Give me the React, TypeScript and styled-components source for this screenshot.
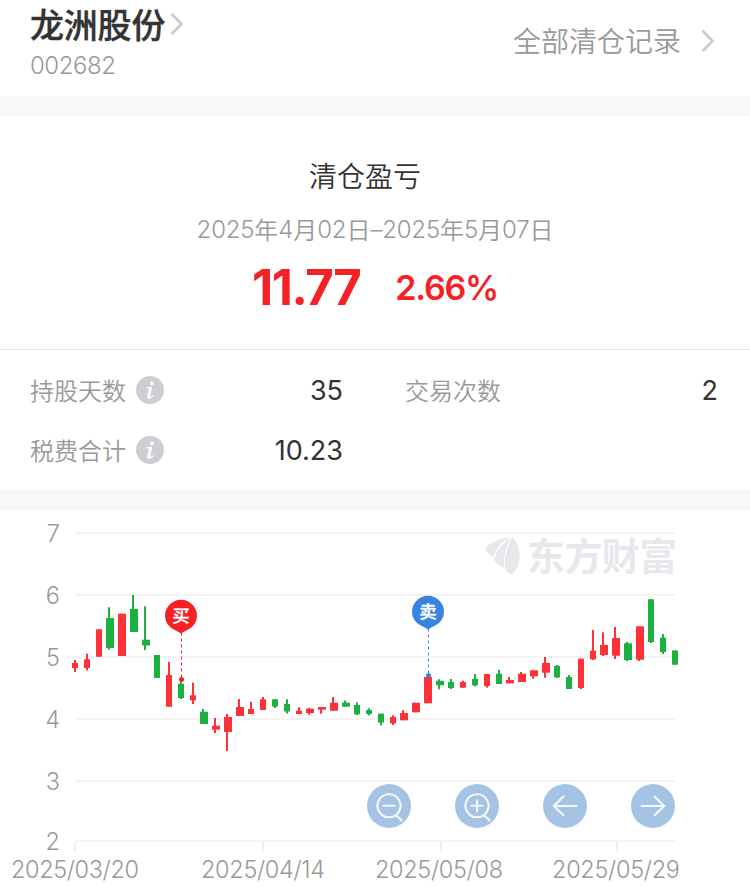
import React from "react";
import styled, { createGlobalStyle } from "styled-components";

const GlobalStyle = createGlobalStyle`
  * { box-sizing: border-box; }
  body {
    margin: 0;
    background: #fff;
    color: #333;
    font-family: Inter, "Noto Sans CJK SC", sans-serif;
  }
  button { border: 0; background: none; padding: 0; font: inherit; color: inherit; }
`;

const Page = styled.main`
  width: 750px;
  height: 887px;
  overflow: hidden;
  display: flex;
  flex-direction: column;
`;

const Header = styled.header`
  height: 96px;
  flex: none;
  display: flex;
  justify-content: space-between;
  padding: 0 35px 0 30px;
`;

const StockName = styled.h1`
  margin: 2px 0 0;
  height: 44px;
  display: flex;
  align-items: center;
  gap: 5px;
  font: 500 34px/44px "Noto Sans CJK SC", sans-serif;
  letter-spacing: -0.2px;
  -webkit-text-stroke: 0.4px #333;
`;

const StockCode = styled.div`
  margin-top: 5px;
  font-size: 24px;
  font-weight: 340;
  line-height: 30px;
  color: #999;
  letter-spacing: -0.45px;
`;

const HistoryLink = styled.button`
  display: flex;
  align-items: center;
  height: 42px;
  margin-top: 19px;
  gap: 20px;
  color: #999;
  font: 350 28px/42px "Noto Sans CJK SC", sans-serif;
  svg { margin-top: 2px; }
`;

const Divider = styled.div`
  height: 20px;
  flex: none;
  background: #f8f8f8;
`;

const Summary = styled.section`
  height: 234px;
  flex: none;
  border-bottom: 1px solid #e9e9e9;
  display: flex;
  flex-direction: column;
  align-items: center;
`;

const SummaryTitle = styled.h2`
  margin: 39px 20px 0 0;
  font: 350 28px/40px "Noto Sans CJK SC", sans-serif;
`;

const DateRange = styled.div`
  margin-top: 17px;
  height: 34px;
  display: flex;
  font: 350 24px/34px "Noto Sans CJK SC", sans-serif;
  color: #999;
`;

const DateDigits = styled.span`
  padding-top: 1px;
  font-family: Inter, sans-serif;
  font-weight: 340;
  letter-spacing: -0.2px;
`;

const Profit = styled.div`
  display: flex;
  align-items: center;
  gap: 35px;
  margin-top: 12px;
  color: #f52124;
  line-height: 60px;
`;

const Amount = styled.strong`
  font-size: 49px;
  font-weight: 650;
  letter-spacing: -1.4px;
`;

const Percent = styled.strong`
  font-size: 34px;
  font-weight: 600;
  letter-spacing: -1.2px;
`;

const Stats = styled.section`
  height: 140px;
  flex: none;
  display: grid;
  grid-template-columns: 375px 375px;
  grid-template-rows: 60px 60px;
  padding-top: 10px;
`;

const Stat = styled.div`
  display: flex;
  align-items: center;
  padding: 0 32px 0 30px;
`;

const StatLabel = styled.span`
  color: #999;
  font: 350 24px/34px "Noto Sans CJK SC", sans-serif;
  margin-right: 10px;
`;

const StatValue = styled.span`
  margin-left: auto;
  padding-top: 2px;
  font: 380 27px/34px Inter, sans-serif;
`;

const ChartPanel = styled.section`
  position: relative;
  height: 377px;
  flex: none;
`;

const ChartSvg = styled.svg`
  display: block;
  font-weight: 340;
`;

const Watermark = styled.div`
  position: absolute;
  left: 484px;
  top: 22px;
  height: 44px;
  display: flex;
  align-items: center;
  gap: 5px;
  color: #e7e7ec;
  font: 700 38px/44px "Noto Sans CJK SC", sans-serif;
  letter-spacing: -0.6px;
`;

const Controls = styled.div`
  position: absolute;
  left: 367px;
  top: 274px;
  display: flex;
  gap: 44px;
`;

const ControlButton = styled.button`
  width: 44px;
  height: 44px;
  border-radius: 50%;
  background: #a5c3e5;
`;

const Icon = styled.svg`
  display: block;
  flex: none;
  fill: none;
`;

function Chevron() {
  return (
    <Icon width="14" height="26" viewBox="0 0 14 26">
      <path d="M1.6 2.8 11.4 13 1.6 23.2" stroke="#ccc" strokeWidth="2.8" />
    </Icon>
  );
}

function InfoIcon() {
  return (
    <Icon width="28" height="28" viewBox="0 0 28 28">
      <circle cx="14" cy="14" r="14" fill="#cdced3" />
      <circle cx="15.9" cy="7.4" r="1.9" fill="#fff" />
      <path d="M11.2 11.8H15.4M12 20.8Q12.6 23.4 16.8 20" stroke="#fff" strokeWidth="1.5" strokeLinecap="round" />
      <path d="M14.6 12.2 12.5 21" stroke="#fff" strokeWidth="2.8" strokeLinecap="round" />
    </Icon>
  );
}

type Candle = [x: number, w: number, high: number, top: number, bottom: number, low: number, up: 0 | 1];

const candles: Candle[] = [
  [72, 6, 660, 663, 668, 672, 1], [84, 6, 653.7, 659.3, 668, 670.3, 1],
  [96, 6, 629.3, 629.3, 656.7, 656.7, 1], [106, 8, 607.3, 618, 648, 649.5, 0],
  [118, 8, 613.7, 613.7, 656, 656, 1], [130, 8, 595, 609, 632, 632, 0],
  [142, 8, 606.3, 639.7, 645.5, 650, 0], [154, 6, 655, 655, 678, 678, 0],
  [166, 6, 662, 675, 706.7, 706.7, 1], [178, 6, 681.7, 683.7, 698, 699, 0],
  [190, 6, 682.7, 695.3, 700.3, 704, 1], [200, 8, 709, 711.7, 724, 724, 0],
  [212, 8, 718, 725.7, 729.7, 733, 1], [224, 8, 714, 717, 732, 751, 1],
  [236, 8, 699, 707, 716, 716, 1], [248, 6, 701.7, 709, 714, 714, 1],
  [260, 6, 697, 699.3, 710, 710, 1], [272, 6, 699.3, 699.3, 706.5, 708, 0],
  [284, 6, 699.3, 704, 711.5, 713.5, 0], [296, 6, 707.3, 710.7, 714, 714, 1],
  [306, 8, 708, 708.7, 713, 714.7, 1], [318, 8, 707, 707, 709.7, 713.7, 1],
  [330, 8, 697, 702.7, 710.7, 710.7, 1], [342, 8, 700.5, 702.7, 706.7, 706.7, 0],
  [354, 6, 702.3, 705, 714.3, 715, 0], [366, 6, 708.3, 710, 714, 715.3, 0],
  [378, 6, 713.7, 713.7, 722.5, 725.3, 0], [390, 6, 715.3, 717, 723.3, 725, 1],
  [400, 8, 710.3, 713, 720.3, 720.3, 1], [412, 8, 702.7, 702.7, 712.3, 712.3, 1],
  [424, 8, 677, 677, 703.3, 703.3, 1], [436, 8, 679.3, 680.7, 685.3, 689.3, 0],
  [448, 6, 679, 682, 688, 689, 0], [460, 6, 680.7, 682, 687.7, 687.7, 1],
  [472, 6, 674, 679, 685.3, 686.3, 0], [484, 6, 674, 674, 686, 687.7, 1],
  [496, 6, 669.7, 673.7, 684, 684, 0], [506, 8, 677, 680, 683.3, 683.3, 1],
  [518, 8, 672, 673.7, 682, 682, 1], [530, 8, 670.3, 670.3, 676.3, 678.7, 1],
  [542, 8, 657, 663, 672.7, 677.7, 1], [554, 6, 665, 666, 677.3, 678, 0],
  [566, 6, 675, 677, 689, 689, 0], [578, 6, 658.7, 658.7, 688, 689, 1],
  [590, 6, 630, 650.7, 659.3, 660, 1], [600, 8, 632.3, 645, 655, 656, 1],
  [612, 8, 627, 638, 655.7, 659, 1], [624, 8, 642, 643.3, 660, 661, 0],
  [636, 8, 626.3, 626.3, 659.7, 661, 1], [648, 6, 599.3, 599.3, 642, 643, 0],
  [660, 6, 634, 637.7, 652, 654, 0], [672, 6, 650.5, 650.5, 664.7, 664.7, 0],
];

const yTicks = [
  { label: "7", y: 533 }, { label: "6", y: 595 }, { label: "5", y: 657 },
  { label: "4", y: 719 }, { label: "3", y: 781 }, { label: "2", y: 841 },
];

const xTicks = [
  { label: "2025/03/20", tick: 75, x: 11, width: 128 },
  { label: "2025/04/14", tick: 263, x: 201, width: 124 },
  { label: "2025/05/08", tick: 441, x: 375, width: 128 },
  { label: "2025/05/29", tick: 617, x: 552, width: 128 },
];

function Marker({ x, y, end, color, label }: { x: number; y: number; end: number; color: string; label: string }) {
  return (
    <g>
      <line x1={x + 0.5} x2={x + 0.5} y1={y + 17} y2={end} stroke={color} strokeWidth="1" strokeDasharray="3 3" />
      <circle cx={x + 0.5} cy={end} r="2.5" fill={color} />
      <path
        d={`M${x} ${y + 18} Q${x - 4} ${y + 15.5} ${x - 9} ${y + 13} A16 15.7 0 1 1 ${x + 9} ${y + 13} Q${x + 4} ${y + 15.5} ${x} ${y + 18}Z`}
        fill={color}
      />
      <text x={x} y={y + 6.5} fontSize="17.5" fontWeight="500" fill="#fff" stroke="#fff" strokeWidth="0.3" textAnchor="middle" fontFamily="Noto Sans CJK SC, sans-serif">
        {label}
      </text>
    </g>
  );
}

function CandleChart() {
  return (
    <ChartSvg width="750" height="377" viewBox="0 510 750 377">
      {yTicks.map((t) => (
        <g key={t.label}>
          <rect x="75" y={t.y - 1} width="600" height="2" fill="#f4f4f4" />
          <text x="60" y={t.y + 9} fontSize="23.5" fill="#999" textAnchor="end">{t.label}</text>
        </g>
      ))}
      {xTicks.map((t) => (
        <g key={t.label}>
          <rect x={t.tick - 1} y="842" width="2" height="9" fill="#eee" />
          <text x={t.x} y="878" fontSize="23.5" fill="#999" textLength={t.width}>{t.label}</text>
        </g>
      ))}
      {candles.map(([x, w, high, top, bottom, low, up]) => (
        <g key={x} fill={up ? "#fd3238" : "#1bb03f"}>
          <rect x={x + 2} y={high} width="2" height={low - high} />
          <rect x={x} y={top} width={w} height={bottom - top} />
        </g>
      ))}
      <Marker x={181} y={615.5} end={679.5} color="#f52124" label="买" />
      <Marker x={428} y={611.5} end={675.5} color="#3883e0" label="卖" />
    </ChartSvg>
  );
}

const stats = [
  { label: "持股天数", value: "35", info: true },
  { label: "交易次数", value: "2", info: false },
  { label: "税费合计", value: "10.23", info: true },
];

const lens = "M22 10.3a11.5 11.5 0 1 0 .01 0M28.8 31 34.5 36.3";
const controls = [
  { name: "缩小", d: `${lens}M16.5 21.8h11` },
  { name: "放大", d: `${lens}M16.5 21.8h11M22 16.3v11` },
  { name: "左移", d: "M33.5 22H10.8M20.5 12.5 10.8 22l9.7 9.3" },
  { name: "右移", d: "M10.5 22h22.7M23.5 12.5l9.7 9.5-9.7 9.3" },
];

export default function App() {
  return (
    <Page>
      <GlobalStyle />
      <Header>
        <div>
          <StockName>龙洲股份<Chevron /></StockName>
          <StockCode>002682</StockCode>
        </div>
        <HistoryLink>全部清仓记录<Chevron /></HistoryLink>
      </Header>
      <Divider />
      <Summary>
        <SummaryTitle>清仓盈亏</SummaryTitle>
        <DateRange>
          <DateDigits>2025</DateDigits>年<DateDigits>4</DateDigits>月<DateDigits>02</DateDigits>日
          <DateDigits>–2025</DateDigits>年<DateDigits>5</DateDigits>月<DateDigits>07</DateDigits>日
        </DateRange>
        <Profit>
          <Amount>11.77</Amount>
          <Percent>2.66%</Percent>
        </Profit>
      </Summary>
      <Stats>
        {stats.map((s) => (
          <Stat key={s.label}>
            <StatLabel>{s.label}</StatLabel>
            {s.info && <InfoIcon />}
            <StatValue>{s.value}</StatValue>
          </Stat>
        ))}
      </Stats>
      <Divider />
      <ChartPanel>
        <CandleChart />
        <Watermark>
          <Icon width="38" height="44" viewBox="0 -2 38 44">
            <path d="M1 13.5Q10 6 26 2.5Q14 10 9 23Q3 20 1 13.5Z" fill="#e7e7ec" />
            <path d="M10 25Q15 11 27.5 3Q19 16 20 34Q12 31 10 25Z" fill="#e7e7ec" />
            <path d="M21 34Q20 18 28.5 3Q37 12 35.5 26Q35 33 27.5 41Q22 38 21 34Z" fill="#e7e7ec" />
          </Icon>
          东方财富
        </Watermark>
        <Controls>
          {controls.map((c) => (
            <ControlButton key={c.name} aria-label={c.name}>
              <Icon width="44" height="44" viewBox="0 0 44 44">
                <path d={c.d} stroke="#f4f8fd" strokeWidth="2.1" strokeLinecap="round" />
              </Icon>
            </ControlButton>
          ))}
        </Controls>
      </ChartPanel>
    </Page>
  );
}
